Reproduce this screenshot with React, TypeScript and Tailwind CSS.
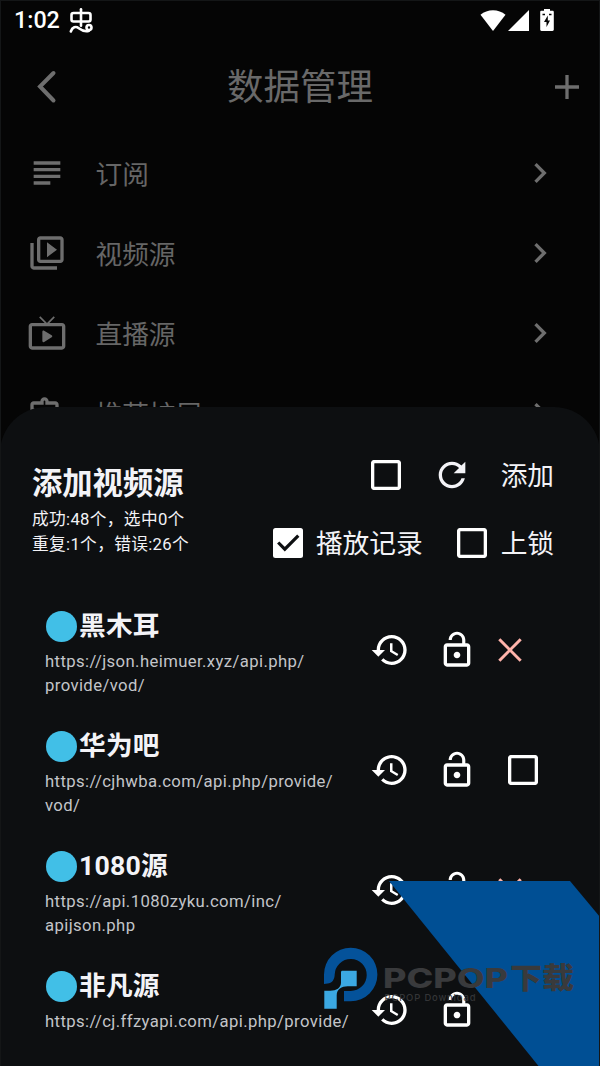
import { ReactNode, useState } from 'react';
import clsx from 'clsx';

interface IconProps {
  d: string;
  className?: string;
}

interface SourceItem {
  name: string;
  lines: string[];
  failed: boolean;
}

const ICONS = {
  subject: 'M14 17H4v2h10v-2zm6-8H4v2h16V9zM4 15h16v-2H4v2zM4 5v2h16V5H4z',
  videoLibrary:
    'M4 6H2v14c0 1.1.9 2 2 2h14v-2H4V6zm16-4H8c-1.1 0-2 .9-2 2v12c0 1.1.9 2 2 2h12c1.1 0 2-.9 2-2V4c0-1.1-.9-2-2-2zm0 14H8V4h12v12zM12 5.5v9l6-4.5z',
  liveTv:
    'M21 6h-7.59l3.29-3.29L16 2l-4 4-4-4-.71.71L10.59 6H3c-1.1 0-2 .89-2 2v12c0 1.1.9 2 2 2h18c1.1 0 2-.9 2-2V8c0-1.11-.9-2-2-2zm0 14H3V8h18v12zM9.2 11.2v5.6c0 .6.6.9 1.1.6l4.5-2.8c.5-.3.5-.9 0-1.2l-4.5-2.8c-.5-.3-1.1 0-1.1.6z',
  extension:
    'M10.5 4.5c.28 0 .5.22.5.5v2h6v6h2c.28 0 .5.22.5.5s-.22.5-.5.5h-2v6h-2.12c-.68-1.75-2.39-3-4.38-3s-3.7 1.25-4.38 3H4v-2.12c1.75-.68 3-2.39 3-4.38 0-1.99-1.24-3.7-2.99-4.38L4 7h6V5c0-.28.22-.5.5-.5m0-2C9.12 2.5 8 3.62 8 5H4c-1.1 0-1.99.9-1.99 2v3.8h.29c1.49 0 2.7 1.21 2.7 2.7s-1.21 2.7-2.7 2.7H2V20c0 1.1.9 2 2 2h3.8v-.3c0-1.49 1.21-2.7 2.7-2.7s2.7 1.21 2.7 2.7v.3H17c1.1 0 2-.9 2-2v-4c1.38 0 2.5-1.12 2.5-2.5S20.38 11 19 11V7c0-1.1-.9-2-2-2h-4c0-1.38-1.12-2.5-2.5-2.5z',
  chevronRight: 'M10 6L8.59 7.41 13.17 12l-4.58 4.59L10 18l6-6z',
  refresh:
    'M17.65 6.35C16.2 4.9 14.21 4 12 4c-4.42 0-7.99 3.58-7.99 8s3.57 8 7.99 8c3.73 0 6.84-2.55 7.73-6h-2.08c-.82 2.33-3.04 4-5.65 4-3.31 0-6-2.69-6-6s2.69-6 6-6c1.66 0 3.14.69 4.22 1.78L13 11h7V4l-2.35 2.35z',
  history:
    'M13 3c-4.97 0-9 4.03-9 9H1l3.89 3.89.07.14L9 12H6c0-3.87 3.13-7 7-7s7 3.13 7 7-3.13 7-7 7c-1.93 0-3.68-.79-4.94-2.06l-1.42 1.42C8.27 19.99 10.51 21 13 21c4.97 0 9-4.03 9-9s-4.03-9-9-9zm-1 5v5l4.28 2.54.72-1.21-3.5-2.08V8H12z',
  lockOpen:
    'M12 17c1.1 0 2-.9 2-2s-.9-2-2-2-2 .9-2 2 .9 2 2 2zm6-9h-1V6c0-2.76-2.24-5-5-5S7 3.24 7 6h1.9c0-1.71 1.39-3.1 3.1-3.1 1.71 0 3.1 1.39 3.1 3.1v2H6c-1.1 0-2 .9-2 2v10c0 1.1.9 2 2 2h12c1.1 0 2-.9 2-2V10c0-1.1-.9-2-2-2zm0 12H6V10h12v10z',
};

const MENU = [
  { label: '订阅', icon: ICONS.subject },
  { label: '视频源', icon: ICONS.videoLibrary },
  { label: '直播源', icon: ICONS.liveTv },
  { label: '推荐扩展', icon: ICONS.extension },
];

const SOURCES: SourceItem[] = [
  { name: '黑木耳', lines: ['https://json.heimuer.xyz/api.php/', 'provide/vod/'], failed: true },
  { name: '华为吧', lines: ['https://cjhwba.com/api.php/provide/', 'vod/'], failed: false },
  { name: '1080源', lines: ['https://api.1080zyku.com/inc/', 'apijson.php'], failed: true },
  { name: '非凡源', lines: ['https://cj.ffzyapi.com/api.php/provide/'], failed: false },
];

function Icon({ d, className }: IconProps) {
  return (
    <svg viewBox="0 0 24 24" className={clsx('size-10 shrink-0 fill-current', className)}>
      <path d={d} />
    </svg>
  );
}

function Checkbox({ checked, onChange }: { checked: boolean; onChange: () => void }) {
  return (
    <button role="checkbox" aria-checked={checked} onClick={onChange} className="size-[30px] shrink-0">
      <svg viewBox="0 0 30 30" className="size-full">
        {checked ? (
          <>
            <rect width="30" height="30" rx="2.5" fill="#fff" />
            <path d="M5.2 14.5l6.6 6.7L25.3 7.6" fill="none" stroke="#0d0f11" strokeWidth="3.2" />
          </>
        ) : (
          <rect x="1.6" y="1.6" width="26.8" height="26.8" rx="2" fill="none" stroke="#fff" strokeWidth="3.4" />
        )}
      </svg>
    </button>
  );
}

function StatusBar() {
  return (
    <div className="flex h-[42px] items-center pl-[14px] pr-[46px] text-white">
      <span className="text-[23.3px] font-medium leading-none">1:02</span>
      <svg viewBox="0 0 24 26" className="ml-[9px] h-[26px] w-6" fill="none" stroke="currentColor" strokeWidth="2.6" strokeLinecap="round">
        <rect x="2.5" y="5" width="19" height="8.5" rx="2" />
        <path d="M12 1.3v16.500" />
        <path d="M1.800 23.500c1.500-4.500 5-5.500 8-3.300s6.500 4 10.200 2.500" />
        <circle cx="20" cy="19.500" r="2.500" />
      </svg>
      <div className="ml-auto flex items-center">
        <svg viewBox="0 0 26 22" className="h-[22px] w-[26px] fill-current">
          <path d="M0.500 4.700C4 1.800 8.300.200 13 .200s9 1.600 12.500 4.500L13 21z" />
        </svg>
        <svg viewBox="0 0 21 22" className="ml-[2px] h-[22px] w-[21px] fill-current">
          <path d="M21 0v21H0z" />
        </svg>
        <svg viewBox="0 0 14 22" className="ml-[11px] mt-[-2px] h-[22px] w-[14px]">
          <path d="M4 0h6v1.800h2.500c.800 0 1.300.500 1.300 1.300v17.500c0 .800-.500 1.400-1.300 1.400h-11c-.800 0-1.300-.600-1.300-1.400V3.100c0-.800.500-1.300 1.300-1.300H4z" fill="#fff" />
          <path d="M2.500 5.500H5M9 5.500h2.500" stroke="#050505" strokeWidth="1.300" />
          <path d="M7.800 6.500L4 13h2.500v5L10 11.500H7.800z" fill="#050505" />
        </svg>
      </div>
    </div>
  );
}

function PageHeader() {
  return (
    <header className="flex h-[91px] items-center justify-between pl-[36px] pr-[21px] text-[#6e6e6e]">
      <svg viewBox="0 0 24 34" className="mt-[-2px] h-[34px] w-6" fill="none" stroke="currentColor" strokeWidth="4" strokeLinecap="round">
        <path d="M17.500 3L4 16.500 17.500 30.500" />
      </svg>
      <h1 className="mt-[2px] mr-[15px] text-[36.500px] leading-none text-[#696969]">数据管理</h1>
      <svg viewBox="0 0 24 24" className="mt-[-2px] size-6" fill="none" stroke="currentColor" strokeWidth="3.300">
        <path d="M12 0v24M0 12h24" />
      </svg>
    </header>
  );
}

function SourceRow({ item }: { item: SourceItem }) {
  const [picked, setPicked] = useState(false);

  return (
    <li className="flex h-[120px] shrink-0 pl-[45px]">
      <div className="w-[325px] pt-4 whitespace-nowrap">
        <div className="flex h-10 items-center">
          <span className="ml-[1px] size-[31px] rounded-full bg-[#41bfe7]" />
          <span className="ml-[2px] text-[26.700px] font-bold leading-10 tracking-[0.200px] text-[#f3f3f7]">{item.name}</span>
        </div>
        <div className="mt-[4px] text-[16.700px] leading-[23.700px] tracking-[0.390px] text-[#c3c5c9]">
          {item.lines.map((line) => (
            <p key={line}>{line}</p>
          ))}
        </div>
      </div>
      <div className="flex h-[120px] items-center text-white">
        <Icon d={ICONS.history} />
        <Icon d={ICONS.lockOpen} className="ml-[26.500px]" />
        {item.failed ? (
          <svg viewBox="0 0 24 24" className="ml-[21.500px] size-6" fill="none" stroke="#ffb4ab" strokeWidth="3">
            <path d="M1.300 1.300l21.400 21.400M22.700 1.300L1.300 22.700" />
          </svg>
        ) : (
          <div className="ml-[31.500px] flex">
            <Checkbox checked={picked} onChange={() => setPicked(!picked)} />
          </div>
        )}
      </div>
    </li>
  );
}

function Label({ children }: { children: ReactNode }) {
  return <span className="ml-[13px] mt-[3px] text-[26.700px] leading-none">{children}</span>;
}

function AddSourceSheet() {
  const [all, setAll] = useState(false);
  const [record, setRecord] = useState(true);
  const [locked, setLocked] = useState(false);

  return (
    <section className="absolute inset-x-0 bottom-0 top-[407px] overflow-hidden rounded-t-[46px] bg-[#0d0f11]">
      <div className="flex h-[183px] justify-between pl-8 pr-[46px] text-[#f3f3f7]">
        <div className="pt-[54px] whitespace-nowrap">
          <h2 className="text-[30.300px] font-bold leading-[46px]">添加视频源</h2>
          <div className="text-[16.700px] leading-[25px] tracking-[0.330px]">
            <p>成功:48个，选中0个</p>
            <p>重复:1个，错误:26个</p>
          </div>
        </div>
        <div className="flex flex-col items-end pt-12">
          <div className="flex h-10 items-center">
            <Checkbox checked={all} onChange={() => setAll(!all)} />
            <Icon d={ICONS.refresh} className="ml-[31.500px] mr-[15.500px]" />
            <Label>添加</Label>
          </div>
          <div className="mt-7 flex h-10 items-center">
            <Checkbox checked={record} onChange={() => setRecord(!record)} />
            <Label>播放记录</Label>
            <span className="w-[34px]" />
            <Checkbox checked={locked} onChange={() => setLocked(!locked)} />
            <span className="w-px" />
            <Label>上锁</Label>
          </div>
        </div>
      </div>
      <ul>
        {SOURCES.map((item) => (
          <SourceRow key={item.name} item={item} />
        ))}
      </ul>
    </section>
  );
}

function Watermark() {
  return (
    <svg viewBox="320 880 280 186" className="pointer-events-none absolute bottom-0 right-0 h-[186px] w-[280px]">
      <path d="M389 881h181l30 36v149h-61.500z" fill="#004f94" />
      <path
        d="M324 984v-9.500a26.700 26.700 0 1 1 26.700 26.700H344V991h6.700a16 16 0 1 0-16-16.500c0 5-3 9-7 9z"
        fill="#04529a"
      />
      <path
        d="M342.500 970.700h14.200v15.600h-9c-6 0-11 3-11 9v13.400h-12.400v-18h6c6 0 10.700-3 10.700-8v-10.500c0-1 .500-1.500 1.500-1.500z"
        fill="#3ba8e2"
      />
      <g fill="#393a3c" fontFamily="Inter, 'Noto Sans CJK SC', sans-serif">
        <text x="383" y="988" fontSize="27" fontWeight="800" textLength="125" lengthAdjust="spacingAndGlyphs">
          PCPOP
        </text>
        <text x="510" y="989" fontSize="29" fontWeight="900" textLength="64" lengthAdjust="spacingAndGlyphs">
          下载
        </text>
        <text x="384.500" y="1001" fontSize="9.500" fontWeight="500" textLength="91" opacity="0.900">
          PCPOP Download
        </text>
      </g>
    </svg>
  );
}

export default function App() {
  return (
    <div className="relative h-[1066px] w-[600px] overflow-hidden bg-[#050505] font-[Roboto,'Noto_Sans_CJK_SC',sans-serif]">
      <StatusBar />
      <PageHeader />
      <nav>
        {MENU.map((entry) => (
          <div key={entry.label} className="flex h-20 items-center pl-[26.500px] pr-10 text-[#6e6e6e]">
            <Icon d={entry.icon} />
            <span className="ml-[29px] mt-1 text-[26.700px] leading-none text-[#666666]">{entry.label}</span>
            <Icon d={ICONS.chevronRight} className="ml-auto" />
          </div>
        ))}
      </nav>
      <AddSourceSheet />
      <Watermark />
      <div className="pointer-events-none absolute inset-0 border border-b-0 border-[#141617]" />
    </div>
  );
}
